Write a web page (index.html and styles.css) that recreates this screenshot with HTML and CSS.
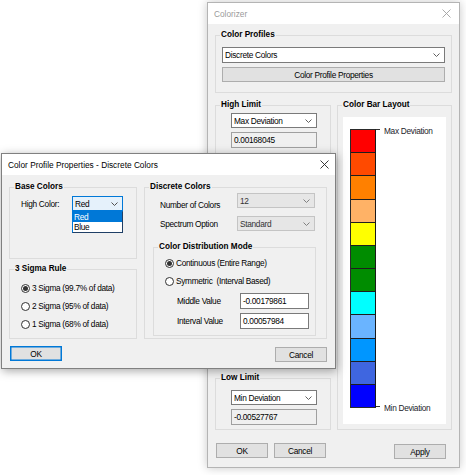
FILE: index.html
```html
<!DOCTYPE html>
<html>
<head>
<meta charset="utf-8">
<title>Colorizer</title>
<link rel="stylesheet" href="styles.css">
</head>
<body>
<div class="window colorizer">
  <div class="titlebar">
    <span class="title">Colorizer</span>
    <svg class="close" width="9" height="9" viewBox="0 0 9 9"><path d="M0.5 0.5 L8.5 8.5 M8.5 0.5 L0.5 8.5" stroke="#a0a0a0" stroke-width="0.9" fill="none"/></svg>
  </div>
  <div class="cz-body">
    <div class="group cp-group">
      <div class="group-title">Color Profiles</div>
      <div class="select cp-select"><span>Discrete Colors</span><svg class="chev" width="7" height="4" viewBox="0 0 7 4"><path d="M0.5 0.5 L3.5 3.5 L6.5 0.5" fill="none" stroke="#606060"/></svg></div>
      <div class="button cp-button">Color Profile Properties</div>
    </div>
    <div class="cz-columns">
      <div class="cz-left">
        <div class="group high-group">
          <div class="group-title">High Limit</div>
          <div class="select limit-select"><span>Max Deviation</span><svg class="chev" width="7" height="4" viewBox="0 0 7 4"><path d="M0.5 0.5 L3.5 3.5 L6.5 0.5" fill="none" stroke="#606060"/></svg></div>
          <div class="textbox readonly limit-box">0.00168045</div>
        </div>
        <div class="group low-group">
          <div class="group-title">Low Limit</div>
          <div class="select limit-select low-select"><span>Min Deviation</span><svg class="chev" width="7" height="4" viewBox="0 0 7 4"><path d="M0.5 0.5 L3.5 3.5 L6.5 0.5" fill="none" stroke="#606060"/></svg></div>
          <div class="textbox readonly limit-box">-0.00527767</div>
        </div>
      </div>
      <div class="group bar-group">
        <div class="group-title">Color Bar Layout</div>
        <div class="bar-panel">
          <div class="bar">
            <div class="seg c1"></div>
            <div class="seg c2"></div>
            <div class="seg c3"></div>
            <div class="seg c4"></div>
            <div class="seg c5"></div>
            <div class="seg c6"></div>
            <div class="seg c7"></div>
            <div class="seg c8"></div>
            <div class="seg c9"></div>
            <div class="seg c10"></div>
            <div class="seg c11"></div>
            <div class="seg c12"></div>
          </div>
          <div class="bar-labels">
            <div class="bar-label"><span class="tick"></span><span>Max Deviation</span></div>
            <div class="bar-label"><span class="tick"></span><span>Min Deviation</span></div>
          </div>
        </div>
      </div>
    </div>
    <div class="cz-buttons">
      <div class="button">OK</div>
      <div class="button">Cancel</div>
      <div class="button apply">Apply</div>
    </div>
  </div>
</div>

<div class="window dialog">
  <div class="titlebar">
    <span class="title">Color Profile Properties - Discrete Colors</span>
    <svg class="close" width="9" height="9" viewBox="0 0 9 9"><path d="M0.5 0.5 L8.5 8.5 M8.5 0.5 L0.5 8.5" stroke="#222" stroke-width="0.9" fill="none"/></svg>
  </div>
  <div class="dlg-body">
    <div class="dlg-columns">
      <div class="dlg-left">
        <div class="group base-group">
          <div class="group-title">Base Colors</div>
          <div class="field-row base-row">
            <span class="base-label">High Color:</span>
            <div class="select focused base-select"><span>Red</span><svg class="chev" width="7" height="4" viewBox="0 0 7 4"><path d="M0.5 0.5 L3.5 3.5 L6.5 0.5" fill="none" stroke="#505050"/></svg>
              <div class="droplist">
                <div class="opt selected">Red</div>
                <div class="opt">Blue</div>
              </div>
            </div>
          </div>
        </div>
        <div class="group sigma-group">
          <div class="group-title">3 Sigma Rule</div>
          <div class="radio-list sigma-list">
            <div class="radio-row"><span class="radio checked"></span><span>3 Sigma (99.7% of data)</span></div>
            <div class="radio-row"><span class="radio"></span><span>2 Sigma (95% of data)</span></div>
            <div class="radio-row"><span class="radio"></span><span>1 Sigma (68% of data)</span></div>
          </div>
        </div>
      </div>
      <div class="group discrete-group">
        <div class="group-title">Discrete Colors</div>
        <div class="field-row num-row">
          <span class="dc-label">Number of Colors</span>
          <div class="select disabled dc-select"><span>12</span><svg class="chev" width="7" height="4" viewBox="0 0 7 4"><path d="M0.5 0.5 L3.5 3.5 L6.5 0.5" fill="none" stroke="#808080"/></svg></div>
        </div>
        <div class="field-row spec-row">
          <span class="dc-label">Spectrum Option</span>
          <div class="select disabled dc-select"><span>Standard</span><svg class="chev" width="7" height="4" viewBox="0 0 7 4"><path d="M0.5 0.5 L3.5 3.5 L6.5 0.5" fill="none" stroke="#808080"/></svg></div>
        </div>
        <div class="group dist-group">
          <div class="group-title">Color Distribution Mode</div>
          <div class="radio-list dist-list">
            <div class="radio-row"><span class="radio checked"></span><span>Continuous (Entire Range)</span></div>
            <div class="radio-row"><span class="radio"></span><span>Symmetric&nbsp; (Interval Based)</span></div>
          </div>
          <div class="field-row mid-row">
            <span class="val-label">Middle Value</span>
            <div class="textbox val-box">-0.00179861</div>
          </div>
          <div class="field-row int-row">
            <span class="val-label">Interval Value</span>
            <div class="textbox val-box">0.00057984</div>
          </div>
        </div>
      </div>
    </div>
    <div class="dlg-buttons">
      <div class="button default">OK</div>
      <div class="button dlg-cancel">Cancel</div>
    </div>
  </div>
</div>
</body>
</html>
```

FILE: styles.css
```css
* { box-sizing: border-box; }
html, body { margin: 0; padding: 0; }
body {
  width: 466px;
  height: 475px;
  background: #ffffff;
  position: relative;
  overflow: hidden;
  font-family: "Liberation Sans", Arial, sans-serif;
  font-size: 8.3px;
  letter-spacing: -0.3px;
  line-height: 10px;
  color: #000;
}

.window {
  position: absolute;
  display: flex;
  flex-direction: column;
  background: #f0f0f0;
}
.colorizer {
  left: 207px;
  top: 2px;
  width: 253px;
  height: 466px;
  border: 1px solid #b4b4b4;
  box-shadow: 0 0 9px rgba(0, 0, 0, 0.22);
}
.dialog {
  left: 1px;
  top: 153px;
  width: 335px;
  height: 216px;
  border: 1px solid #808080;
  box-shadow: 1px 2px 9px rgba(0, 0, 0, 0.35);
}

.titlebar {
  flex: none;
  height: 21px;
  background: #ffffff;
  display: flex;
  align-items: center;
  justify-content: space-between;
  padding: 0 8px 0 6px;
}
.dialog .titlebar { padding-right: 6px; }
.title { font-size: 8.3px; letter-spacing: 0; }
.colorizer .title { color: #9a9a9a; }
.close { display: block; }

/* generic controls */
.group {
  --pl: 0px;
  border: 1px solid #dcdcdc;
  display: flex;
  flex-direction: column;
  padding-left: var(--pl);
}
.group-title {
  font-weight: bold;
  font-size: 8.2px;
  letter-spacing: 0;
  margin: -6px 0 0 calc(4px - var(--pl));
  padding: 0 1px;
  height: 10px;
  line-height: 10px;
  background: #f0f0f0;
  width: fit-content;
  white-space: nowrap;
}
.select {
  position: relative;
  display: flex;
  align-items: center;
  justify-content: space-between;
  border: 1px solid #7a7a7a;
  background: #ffffff;
  padding: 0 4px 0 2px;
  height: 15px;
  white-space: nowrap;
}
.select.disabled {
  background: #e6e6e6;
  border-color: #c4c4c4;
  color: #333;
}
.select.focused {
  background: #e5f1fb;
  border-color: #0078d7;
}
.chev { display: block; flex: none; }
.textbox {
  display: flex;
  align-items: center;
  border: 1px solid #7a7a7a;
  background: #ffffff;
  padding-left: 2px;
  height: 16px;
  white-space: nowrap;
}
.textbox.readonly {
  background: #f0f0f0;
  border-color: #a0a0a0;
}
.button {
  display: flex;
  align-items: center;
  justify-content: center;
  width: 52px;
  height: 15px;
  background: #e1e1e1;
  border: 1px solid #adadad;
  white-space: nowrap;
}
.button.default {
  border-color: #0078d7;
  box-shadow: inset 0 0 0 0.5px #0078d7;
}
.field-row {
  display: flex;
  align-items: center;
}
.radio-row {
  display: flex;
  align-items: center;
  height: 18px;
  white-space: nowrap;
}
.radio {
  flex: none;
  width: 9px;
  height: 9px;
  border: 1px solid #333;
  border-radius: 50%;
  background: #fff;
  margin-right: 2px;
  display: flex;
  align-items: center;
  justify-content: center;
}
.radio.checked::after {
  content: "";
  width: 5px;
  height: 5px;
  border-radius: 50%;
  background: #333;
}

/* Colorizer */
.cz-body {
  flex: 1;
  display: flex;
  flex-direction: column;
  padding: 11px 7px 0 7px;
}
.cp-group {
  --pl: 6px;
  height: 58px;
  padding-right: 6px;
}
.cp-select { margin-top: 7px; height: 16px; }
.cp-button { margin-top: 4px; width: auto; }

.cz-columns {
  margin-top: 12px;
  height: 325px;
  display: flex;
  gap: 6px;
}
.cz-left {
  width: 116px;
  display: flex;
  flex-direction: column;
  justify-content: space-between;
}
.high-group { --pl: 15px; height: 100px; }
.low-group { --pl: 15px; height: 52px; }
.limit-select { width: 86px; margin-top: 3px; }
.low-select { margin-top: 7px; }
.limit-box { width: 86px; margin-top: 4px; }

.bar-group {
  --pl: 5px;
  width: 115px;
  padding-right: 5px;
  padding-bottom: 5px;
}
.bar-panel {
  flex: 1;
  margin-top: 7px;
  background: #ffffff;
  display: flex;
  align-items: flex-start;
  padding-left: 7px;
}
.bar {
  margin-top: 12px;
  width: 26px;
  height: 279px;
  display: flex;
  flex-direction: column;
  border: 1px solid #2a2a2a;
  border-right-color: #1a1a1a;
}
.seg { flex: 1; border-top: 1px solid #1e1e1e; }
.seg.c1 { border-top: none; }
.c1 { background: #ff0000; }
.c2 { background: #ff4a00; }
.c3 { background: #ff8000; }
.c4 { background: #ffb266; }
.c5 { background: #ffff00; }
.c6 { background: #008c00; }
.c7 { background: #008c00; }
.c8 { background: #00ffff; }
.c9 { background: #6ab4ff; }
.c10 { background: #0096ff; }
.c11 { background: #3f66e0; }
.c12 { background: #0000ff; }
.bar-labels {
  margin-top: 9px;
  height: 287px;
  display: flex;
  flex-direction: column;
  justify-content: space-between;
}
.bar-label {
  display: flex;
  align-items: flex-start;
  color: #1c1c2a;
  white-space: nowrap;
}
.tick {
  width: 4px;
  height: 1px;
  background: #333;
  margin: 3px 4px 0 0;
}

.cz-buttons {
  margin-top: 13px;
  display: flex;
  gap: 6px;
  padding: 0 6px 0 1px;
}
.apply { margin-left: auto; margin-top: 1px; }

/* Dialog */
.dlg-body {
  flex: 1;
  display: flex;
  flex-direction: column;
  padding: 12px 8px 0 7px;
}
.dlg-columns {
  height: 152px;
  display: flex;
  gap: 7px;
}
.dlg-left {
  width: 128px;
  display: flex;
  flex-direction: column;
  gap: 10px;
}
.base-group { --pl: 11px; height: 72px; }
.base-row { margin-top: 4px; }
.base-label { width: 51px; }
.base-select { width: 51px; }
.droplist {
  position: absolute;
  left: -1px;
  top: 14px;
  width: 51px;
  background: #ffffff;
  border: 1px solid #1f3f66;
  border-left-color: #0078d7;
  border-top-color: #0078d7;
  z-index: 5;
}
.opt {
  height: 10px;
  line-height: 10px;
  padding-left: 1px;
}
.opt.selected { background: #0078d7; color: #ffffff; }

.sigma-group { --pl: 11px; height: 70px; }
.sigma-list { margin-top: 5px; }

.discrete-group {
  --pl: 15px;
  width: 183px;
  padding-right: 10px;
}
.num-row { margin-top: 1px; align-items: flex-start; }
.spec-row { margin-top: 6px; }
.dc-label { width: 77px; white-space: nowrap; }
.num-row .dc-label { margin-top: 7px; }
.dc-select { width: 78px; }

.dist-group {
  --pl: 11px;
  margin: 16px 0 0 -7px;
  height: 89px;
}
.dist-list { margin-top: 2px; }
.mid-row { margin-top: 3px; padding-left: 12px; }
.int-row { margin-top: 4px; padding-left: 12px; }
.val-label { width: 63px; white-space: nowrap; }
.val-box { width: 69px; }

.dlg-buttons {
  margin-top: 7px;
  display: flex;
  justify-content: space-between;
  padding-left: 1px;
}
.dlg-cancel { margin-top: 1px; }
```
